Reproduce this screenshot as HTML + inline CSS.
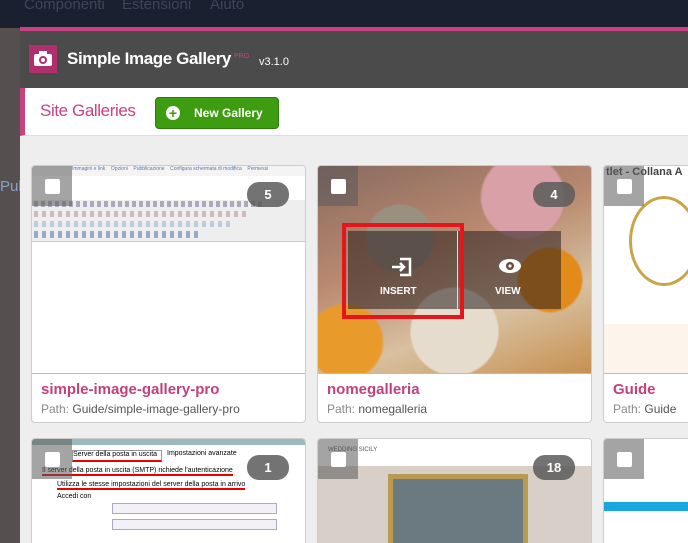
<!DOCTYPE html>
<html><head><meta charset="utf-8"><style>
*{margin:0;padding:0;box-sizing:border-box}
html,body{width:688px;height:543px;overflow:hidden}
body{background:#55504f;font-family:"Liberation Sans","DejaVu Sans",sans-serif;position:relative}
.top{position:absolute;left:0;top:0;width:688px;height:28px;background:#1a2030;color:#3c4558;font-size:15px}
.top span{position:absolute;top:-4px}
.modal{position:absolute;left:20px;top:27px;width:668px;height:516px;background:#eeeeee;overflow:hidden}
.pink{height:4px;background:#c9417f}
.hdr{height:57px;background:#4b4b4b;position:relative}
.logo{position:absolute;left:9px;top:14px;width:28px;height:28px;background:#b0306e}
.ttl{position:absolute;left:47px;top:18px;color:#fff;font-size:17px;font-weight:bold;letter-spacing:-0.4px}
.pro{position:absolute;left:214px;top:22px;color:#c9417f;font-size:7px}
.ver{position:absolute;left:239px;top:25px;color:#fff;font-size:11px}
.bar{height:48px;background:#fff;border-left:5px solid #c9417f;position:relative;border-bottom:1px solid #ddd}
.bar .st{position:absolute;left:15px;top:13px;color:#c9417f;font-size:17px;letter-spacing:-0.4px}
.btn{position:absolute;left:130px;top:9px;width:124px;height:32px;background:#3d9c10;border-radius:4px;border:1px solid #2c7a0a;color:#fff;font-weight:bold;font-size:12px}
.btn i{position:absolute;left:10px;top:8px;width:14px;height:14px;border-radius:50%;background:#fff;color:#3d9c10;font-style:normal;text-align:center;line-height:14px;font-size:14px}
.btn b{position:absolute;left:38px;top:8px}
.card{position:absolute;width:275px;height:258px;background:#fff;border:1px solid #ccc;border-radius:4px;overflow:hidden}
.img{position:absolute;left:0;top:0;width:100%;height:208px;border-bottom:1px solid #bbb;overflow:hidden}
.chk{position:absolute;left:0;top:0;width:40px;height:40px;background:rgba(90,90,90,.55)}
.chk:after{content:"";position:absolute;left:13px;top:13px;width:15px;height:15px;background:#fff;border-radius:2px}
.cnt{position:absolute;right:16px;top:16px;width:42px;height:25px;border-radius:12px;background:rgba(90,90,90,.85);color:#fff;font-weight:bold;font-size:13px;text-align:center;line-height:25px}
.nm{position:absolute;left:9px;top:215px;color:#c2407d;font-weight:bold;font-size:15px}
.pth{position:absolute;left:9px;top:236px;color:#888;font-size:12px}
.pth span{color:#555}
</style></head><body>
<div class="top"><span style="left:24px">Componenti</span><span style="left:122px">Estensioni</span><span style="left:210px">Aiuto</span></div>
<div style="position:absolute;left:0;top:178px;color:#8aa0c8;font-size:15px">Pub</div>
<div class="modal">
<div class="pink"></div>
<div class="hdr"><div class="logo"><svg width="28" height="28"><rect x="5" y="9" width="18" height="12" rx="2" fill="#fff"/><rect x="10" y="6" width="8" height="4" fill="#fff"/><circle cx="14" cy="15" r="4" fill="#b0306e"/><circle cx="14" cy="15" r="2" fill="#fff"/></svg></div>
<div class="ttl">Simple Image Gallery</div><div class="pro">PRO</div><div class="ver">v3.1.0</div></div>
<div class="bar"><div class="st">Site Galleries</div><div class="btn"><i>+</i><b>New Gallery</b></div></div>

<div class="card" style="left:11px;top:138px">
<div class="img" style="background:#fff">
<div style="height:10px;background:#f4f4f4;font-size:5px;color:#57a;padding-left:40px;white-space:nowrap">Immagini e link &nbsp;&nbsp; Opzioni &nbsp;&nbsp; Pubblicazione &nbsp;&nbsp; Configura schermata di modifica &nbsp;&nbsp; Permessi</div>
<div style="position:absolute;top:34px;left:0;width:100%;height:42px;background:#eeeeee;border-bottom:1px solid #ccc"></div>
<div style="position:absolute;top:35px;left:2px;width:230px;height:6px;background:repeating-linear-gradient(90deg,#aab 0 4px,#eee 4px 7px)"></div>
<div style="position:absolute;top:45px;left:2px;width:215px;height:6px;background:repeating-linear-gradient(90deg,#cbb 0 4px,#eee 4px 8px)"></div>
<div style="position:absolute;top:55px;left:2px;width:200px;height:6px;background:repeating-linear-gradient(90deg,#bcd 0 4px,#eee 4px 8px)"></div>
<div style="position:absolute;top:65px;left:2px;width:165px;height:7px;background:repeating-linear-gradient(90deg,#9ac 0 4px,#eee 4px 8px)"></div>
<div class="chk"></div><div class="cnt">5</div></div>
<div class="nm">simple-image-gallery-pro</div><div class="pth">Path: <span>Guide/simple-image-gallery-pro</span></div></div>

<div class="card" style="left:297px;top:138px">
<div class="img" style="background:radial-gradient(circle at 30% 35%,#999080 0 14%,transparent 15%),radial-gradient(circle at 50% 80%,#e6dccd 0 20%,transparent 21%),radial-gradient(circle at 85% 55%,#e28a1a 0 12%,transparent 13%),radial-gradient(circle at 10% 85%,#e89a2a 0 12%,transparent 13%),radial-gradient(circle at 75% 15%,#d9a0a8 0 15%,transparent 16%),linear-gradient(160deg,#8a6a60,#b98a70 40%,#d8c0a0 70%,#c79050)">
<div class="chk"></div><div class="cnt">4</div>
<div style="position:absolute;left:30px;top:65px;width:213px;height:78px;background:rgba(40,30,30,.55)"></div>
<div style="position:absolute;left:139px;top:65px;width:1px;height:78px;background:#ddd"></div>
<div style="position:absolute;left:24px;top:57px;width:122px;height:96px;border:4px solid #e8141c"></div>
<svg style="position:absolute;left:72px;top:90px" width="24" height="22" viewBox="0 0 24 22"><path d="M10 3h10v16H10M2 11h12M10 7l4 4-4 4" fill="none" stroke="#fff" stroke-width="2.5"/></svg>
<div style="position:absolute;left:62px;top:120px;color:#fff;font-weight:bold;font-size:10px">INSERT</div>
<svg style="position:absolute;left:180px;top:92px" width="24" height="16"><ellipse cx="12" cy="8" rx="11" ry="7" fill="#fff"/><circle cx="12" cy="8" r="4" fill="#6a4a3a"/><circle cx="12" cy="8" r="1.6" fill="#fff"/></svg>
<div style="position:absolute;left:177px;top:120px;color:#fff;font-weight:bold;font-size:10px">VIEW</div>
</div>
<div class="nm">nomegalleria</div><div class="pth">Path: <span>nomegalleria</span></div></div>

<div class="card" style="left:583px;top:138px">
<div class="img" style="background:#fff">
<div style="position:absolute;left:2px;top:0;font-size:11px;font-weight:bold;color:#444;white-space:nowrap">tlet - Collana A</div>
<div style="position:absolute;left:25px;top:30px;width:70px;height:90px;border:3px solid #c9a54a;border-radius:50%"></div>
<div style="position:absolute;left:0;top:158px;width:100%;height:50px;background:#fdf4ec"></div>
<div class="chk"></div></div>
<div class="nm">Guide</div><div class="pth">Path: <span>Guide</span></div></div>

<div class="card" style="left:11px;top:411px">
<div class="img" style="background:#fff">
<div style="height:6px;background:#9bb"></div>
<div style="position:absolute;left:40px;top:11px;width:90px;height:12px;border:1px solid #999;border-bottom:2px solid #e00;font-size:7px;white-space:nowrap">Server della posta in uscita</div>
<div style="position:absolute;left:135px;top:11px;font-size:7px;white-space:nowrap">Impostazioni avanzate</div>
<div style="position:absolute;left:10px;top:28px;font-size:7px;border-bottom:2px solid #e00;white-space:nowrap">Il server della posta in uscita (SMTP) richiede l'autenticazione</div>
<div style="position:absolute;left:25px;top:42px;font-size:7px;border-bottom:2px solid #e00;white-space:nowrap">Utilizza le stesse impostazioni del server della posta in arrivo</div>
<div style="position:absolute;left:25px;top:54px;font-size:7px">Accedi con</div>
<div style="position:absolute;left:80px;top:64px;width:165px;height:11px;border:1px solid #aac;background:#f4f0f8"></div>
<div style="position:absolute;left:80px;top:80px;width:165px;height:11px;border:1px solid #aac;background:#f4f0f8"></div>
<div class="chk"></div><div class="cnt">1</div></div></div>

<div class="card" style="left:297px;top:411px">
<div class="img" style="background:linear-gradient(#fff 0 27px,#d8d0c8 27px)">
<div style="position:absolute;left:10px;top:8px;font-size:6px;color:#555">WEDDING SICILY</div>
<div style="position:absolute;left:70px;top:35px;width:140px;height:100px;border:5px solid #b89a50;background:#6a7a80"></div>
<div class="chk"></div><div class="cnt">18</div></div></div>

<div class="card" style="left:583px;top:411px">
<div class="img" style="background:#fff">
<div style="position:absolute;left:0;top:63px;width:100%;height:9px;background:#19a7e0"></div>
<div class="chk"></div></div></div>
</div>
</body></html>
